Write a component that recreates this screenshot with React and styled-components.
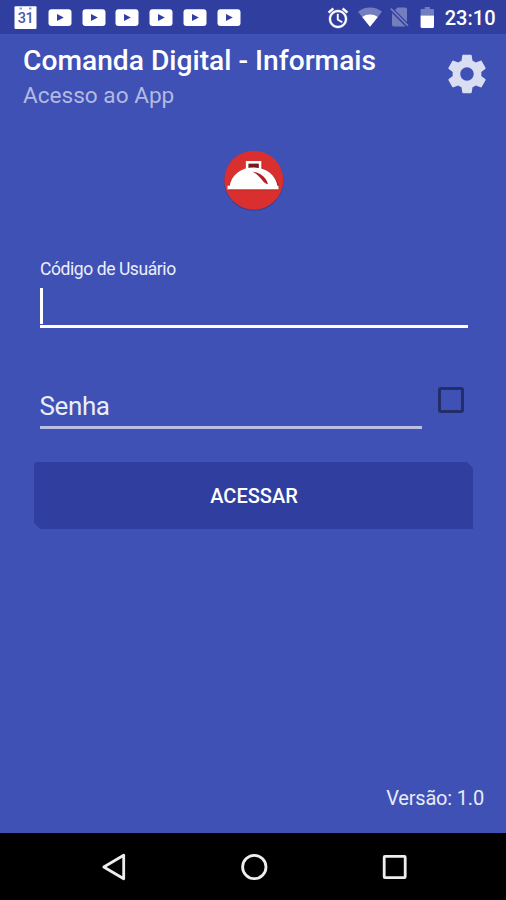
import React, { useState } from 'react'
import styled, { createGlobalStyle } from 'styled-components'

const GlobalStyle = createGlobalStyle`
  * {
    box-sizing: border-box;
  }

  body {
    margin: 0;
    background: #3f51b5;
    font-family: Roboto, 'Liberation Sans', sans-serif;
  }
`

const notifications = [1, 2, 3, 4, 5, 6]

const CalendarIcon = () => (
  <CalendarBox>
    <svg width="23" height="24" viewBox="0 0 23 24">
      <rect x="0.500" y="0.300" width="22" height="22.700" rx="1" fill="#fff" />
      <path d="M5.500 1.500h2.500v2H5.500zM15 1.500h2.500v2H15z" fill="#8f98cf" />
    </svg>
    <CalendarDay>31</CalendarDay>
  </CalendarBox>
)

const VideoIcon = () => (
  <svg width="24" height="18" viewBox="0 0 24 18">
    <rect x="0.500" y="0.300" width="23" height="16.700" rx="3" fill="#fff" />
    <path d="M9 5l6.800 3.500L9 12z" fill="#303f9f" />
  </svg>
)

const AlarmIcon = () => (
  <svg width="24" height="24" viewBox="0 0 24 24">
    <path
      fill="#fff"
      stroke="#fff"
      strokeWidth="0.400"
      d="M22 5.720l-4.600-3.860-1.290 1.530 4.600 3.860L22 5.720zM7.880 3.390L6.600 1.860 2 5.710l1.290 1.530 4.590-3.850zM12.500 8H11v6l4.750 2.850.75-1.230-4-2.370V8zM12 4c-4.970 0-9 4.030-9 9s4.020 9 9 9c4.970 0 9-4.030 9-9s-4.030-9-9-9zm0 16c-3.870 0-7-3.130-7-7s3.130-7 7-7 7 3.130 7 7-3.130 7-7 7z"
    />
  </svg>
)

const WifiIcon = () => (
  <svg width="24" height="21" viewBox="0 0 24 21">
    <path d="M0 4.700C3.200 2 7.600.500 12 .500s8.800 1.500 12 4.200L12 19.800z" fill="#fff" opacity="0.330" />
    <path d="M4.200 10.100C6.500 8.300 9 7.500 12 7.500s5.500.8 7.800 2.600L12 19.800z" fill="#fff" />
  </svg>
)

const NoSimIcon = () => (
  <svg width="20" height="21" viewBox="0 0 20 21">
    <g fill="#fff" opacity="0.330">
      <path d="M8.500.500H16c1.200 0 2 .8 2 2V15L6 3z" />
      <path d="M2.500 1L19.500 18l-1.300 1.300L1.200 2.300z" />
      <path d="M3 6L16.500 19.500H5c-1.200 0-2-.8-2-2z" />
    </g>
  </svg>
)

const BatteryIcon = () => (
  <svg width="15" height="22" viewBox="0 0 15 22">
    <path d="M1.800 2h3V0h5v2h3c.7 0 1.200.5 1.200 1.200V8.500H.600V3.200c0-.7.500-1.200 1.200-1.200z" fill="#fff" opacity="0.330" />
    <path d="M.600 8.500H14v11.300c0 .7-.5 1.200-1.200 1.200h-11c-.7 0-1.200-.5-1.200-1.200z" fill="#fff" />
  </svg>
)

const GearIcon = () => (
  <svg width="46" height="46" viewBox="0 0 24 24">
    <path
      fill="#dadef2"
      d="M19.430 12.980c.04-.32.07-.64.07-.98s-.03-.66-.07-.98l2.110-1.650c.19-.15.24-.42.12-.64l-2-3.460c-.12-.22-.39-.3-.61-.22l-2.490 1c-.52-.4-1.080-.73-1.690-.98l-.38-2.650C14.460 2.180 14.250 2 14 2h-4c-.25 0-.46.18-.49.42l-.38 2.650c-.61.25-1.170.59-1.690.98l-2.490-1c-.23-.09-.49 0-.61.22l-2 3.460c-.13.22-.07.49.12.64l2.110 1.650c-.04.32-.07.65-.07.98s.03.66.07.98l-2.110 1.650c-.19.15-.24.42-.12.64l2 3.460c.12.22.39.3.61.22l2.490-1c.52.4 1.080.73 1.690.98l.38 2.650c.03.24.24.42.49.42h4c.25 0 .46-.18.49-.42l.38-2.650c.61-.25 1.170-.59 1.690-.98l2.490 1c.23.09.49 0 .61-.22l2-3.460c.12-.22.07-.49-.12-.64l-2.110-1.650zM12 15.500c-1.930 0-3.500-1.570-3.500-3.500s1.570-3.500 3.500-3.500 3.500 1.570 3.500 3.500-1.570 3.500-3.500 3.500z"
    />
  </svg>
)

const Logo = () => (
  <svg width="62" height="64" viewBox="0 0 62 64">
    <circle cx="30.800" cy="32" r="29.700" fill="#27327c" opacity="0.600" />
    <circle cx="30.800" cy="31.200" r="29.500" fill="#d9302f" />
    {/* shadow of the lid */}
    <path d="M22.500 12h17v8c9 3 15 9 17 18H5.500c2-9 8-15 17-18z" fill="#8c1518" opacity="0.450" />
    <path d="M24.200 22v-8.600h12.800V22" fill="none" stroke="#fff" strokeWidth="2.800" />
    <path d="M25.600 14.800h10v4.200h-10z" fill="#741a20" />
    <path d="M6.500 37.500C8 26 18 18.500 30.500 18.500S53 26 54.500 37.500z" fill="#fff" />
    <path d="M4.500 36.800h51v3.600h-51z" fill="#fff" />
    <path d="M5 40.800h50.500" stroke="#8c1518" strokeWidth="0.800" opacity="0.600" />
    <path d="M29.500 22.800c8 .7 14 5.700 15.500 12.500-5.500-.6-6.500-8-15.500-12.500z" fill="#b51f2a" />
  </svg>
)

export default function App() {
  const [user, setUser] = useState('')
  const [remember, setRemember] = useState(false)

  return (
    <Screen>
      <GlobalStyle />
      <StatusBar>
        <Notifications>
          <CalendarIcon />
          {notifications.map(n => <VideoIcon key={n} />)}
        </Notifications>
        <SystemIcons>
          <AlarmIcon />
          <WifiIcon />
          <NoSimIcon />
          <BatteryIcon />
          <Clock>23:10</Clock>
        </SystemIcons>
      </StatusBar>

      <Header>
        <div>
          <Title>Comanda Digital - Informais</Title>
          <Subtitle>Acesso ao App</Subtitle>
        </div>
        <IconButton aria-label="Configurações">
          <GearIcon />
        </IconButton>
      </Header>

      <LogoRow>
        <Logo />
      </LogoRow>

      <Form onSubmit={e => e.preventDefault()}>
        <Label htmlFor="user">Código de Usuário</Label>
        <UserField>
          {user === '' && <Caret />}
          <UserInput id="user" value={user} onChange={e => setUser(e.target.value)} />
        </UserField>
        <PasswordRow>
          <PasswordInput type="password" placeholder="Senha" />
          <CheckBox
            type="button"
            role="checkbox"
            aria-checked={remember}
            $checked={remember}
            onClick={() => setRemember(!remember)}
          />
        </PasswordRow>
        <SubmitButton>ACESSAR</SubmitButton>
      </Form>

      <Version>Versão: 1.0</Version>

      <NavBar>
        <svg width="26" height="30" viewBox="0 0 26 30">
          <path d="M22.700 3.200v23.600L2.800 15z" fill="none" stroke="#eee" strokeWidth="2.800" strokeLinejoin="round" />
        </svg>
        <svg width="28" height="28" viewBox="0 0 28 28">
          <circle cx="13.300" cy="14" r="11.700" fill="none" stroke="#eee" strokeWidth="2.800" />
        </svg>
        <svg width="26" height="26" viewBox="0 0 26 26">
          <rect x="2.200" y="2.400" width="21" height="21.200" rx="0.800" fill="none" stroke="#eee" strokeWidth="2.800" />
        </svg>
      </NavBar>
    </Screen>
  )
}

const Screen = styled.div`
  width: 506px;
  height: 900px;
  display: flex;
  flex-direction: column;
  overflow: hidden;
  background: #3f51b5;
  color: #fff;
`

const StatusBar = styled.div`
  flex: none;
  height: 34px;
  display: flex;
  justify-content: space-between;
  align-items: center;
  padding: 1px 10.500px 0 14px;
  background: #303f9f;
`

const Notifications = styled.div`
  display: flex;
  align-items: center;
  gap: 9.800px;
`

const CalendarBox = styled.div`
  display: grid;
  margin-right: 1px;

  > * {
    grid-area: 1 / 1;
  }
`

const CalendarDay = styled.span`
  align-self: center;
  justify-self: center;
  padding-top: 2px;
  font-size: 14.500px;
  font-weight: 500;
  line-height: 14px;
  letter-spacing: -0.500px;
  color: #4a57ab;
`

const SystemIcons = styled.div`
  display: flex;
  align-items: center;
  gap: 8px;

  > :nth-child(3) {
    margin: 0 3px 0 -1px;
  }
`

const Clock = styled.span`
  margin-left: 2px;
  font-size: 20px;
  font-weight: 500;
`

const Header = styled.header`
  display: flex;
  justify-content: space-between;
  padding: 10px 16px 0 23px;
`

const Title = styled.h1`
  margin: 0;
  font-size: 28.200px;
  font-weight: 500;
  line-height: 34px;
  white-space: nowrap;
`

const Subtitle = styled.p`
  margin: 2px 0 0;
  font-size: 22.600px;
  line-height: 32px;
  color: #b3bae2;
`

const IconButton = styled.button`
  margin-top: 7px;
  height: 46px;
  padding: 0;
  border: none;
  background: none;
`

const LogoRow = styled.div`
  display: flex;
  justify-content: center;
  margin-top: 37px;
  padding-left: 1px;
`

const Form = styled.form`
  display: flex;
  flex-direction: column;
  padding: 0 33px 0 34px;
`

const Label = styled.label`
  margin: 46px 0 0 6px;
  font-size: 17.500px;
  line-height: 20px;
  letter-spacing: -0.420px;
  color: #eceffa;
`

const UserField = styled.div`
  display: flex;
  align-items: flex-start;
  height: 49px;
  margin: 0 5px 0 5.500px;
  padding-top: 9px;
  border-bottom: 3px solid #fff;
`

const Caret = styled.span`
  width: 3px;
  height: 36px;
  background: #fff;
`

const UserInput = styled.input`
  flex: 1;
  height: 35px;
  padding: 0;
  border: none;
  outline: none;
  background: none;
  color: #fff;
  font: 400 25px Roboto, sans-serif;
`

const PasswordRow = styled.div`
  display: flex;
  justify-content: space-between;
  margin: 59px 9.500px 0 5.500px;
`

const PasswordInput = styled.input`
  width: 382px;
  height: 42px;
  padding: 0 0 2px;
  border: none;
  border-bottom: 3px solid #b9c0e4;
  outline: none;
  background: none;
  color: #fff;
  font: 400 26px Roboto, sans-serif;
  letter-spacing: -0.400px;

  &::placeholder {
    color: #e9ecf9;
    opacity: 1;
  }
`

const CheckBox = styled.button`
  width: 26px;
  height: 26px;
  padding: 0;
  border: 3px solid #222d69;
  border-radius: 3px;
  background: ${p => (p.$checked ? '#222d69' : 'transparent')};
`

const SubmitButton = styled.button`
  height: 67px;
  margin-top: 33px;
  padding: 1px 0 0 1px;
  border: none;
  background: #303f9f;
  clip-path: polygon(2px 0, 433px 0, 100% 6px, 100% 100%, 6px 100%, 0 61px, 0 2px);
  color: #fff;
  font: 500 20px Roboto, sans-serif;
`

const Version = styled.p`
  margin: auto 22px 22px 0;
  text-align: right;
  font-size: 20px;
  line-height: 26px;
  letter-spacing: -0.180px;
  color: #e8ebf8;
`

const NavBar = styled.nav`
  flex: none;
  height: 67px;
  display: flex;
  justify-content: space-between;
  align-items: center;
  padding: 0 98px 0 101px;
  background: #000;
`
